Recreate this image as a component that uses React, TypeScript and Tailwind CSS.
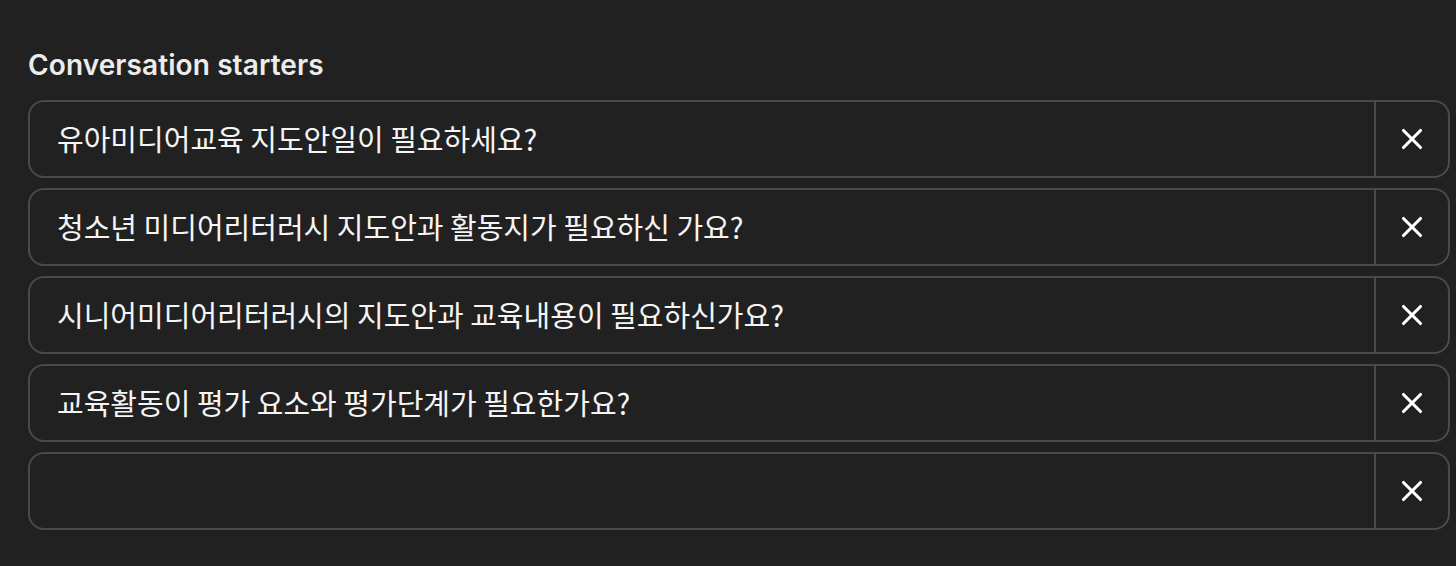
import { X } from "lucide-react";

const STARTERS = [
  "유아미디어교육 지도안일이 필요하세요?",
  "청소년 미디어리터러시 지도안과 활동지가 필요하신 가요?",
  "시니어미디어리터러시의 지도안과 교육내용이 필요하신가요?",
  "교육활동이 평가 요소와 평가단계가 필요한가요?",
  "",
];

function StarterRow({ text }: { text: string }) {
  return (
    <div className="flex h-[78px] rounded-[16px] border-2 border-[#4a4a4a] bg-[#212121]">
      <div className="flex flex-1 items-center px-[27px] text-[29px] text-[#f5f5f5] [font-family:'Noto_Sans_CJK_KR','Noto_Sans',sans-serif]">
        {text}
      </div>
      <button className="flex w-[74px] items-center justify-center border-l-2 border-[#4a4a4a] text-white">
        <X size={34} strokeWidth={2.2} />
      </button>
    </div>
  );
}

export default function App() {
  return (
    <div className="min-h-[566px] w-full bg-[#212121] pl-[28px] pr-[6px] pt-[46px] [font-family:Inter,'Noto_Sans',sans-serif]">
      <h2 className="mb-[16px] text-[28px] font-semibold leading-[38px] tracking-[0.1px] text-[#ececec]">
        Conversation starters
      </h2>
      <div className="flex flex-col gap-[10px]">
        {STARTERS.map((s, i) => (
          <StarterRow key={i} text={s} />
        ))}
      </div>
    </div>
  );
}
